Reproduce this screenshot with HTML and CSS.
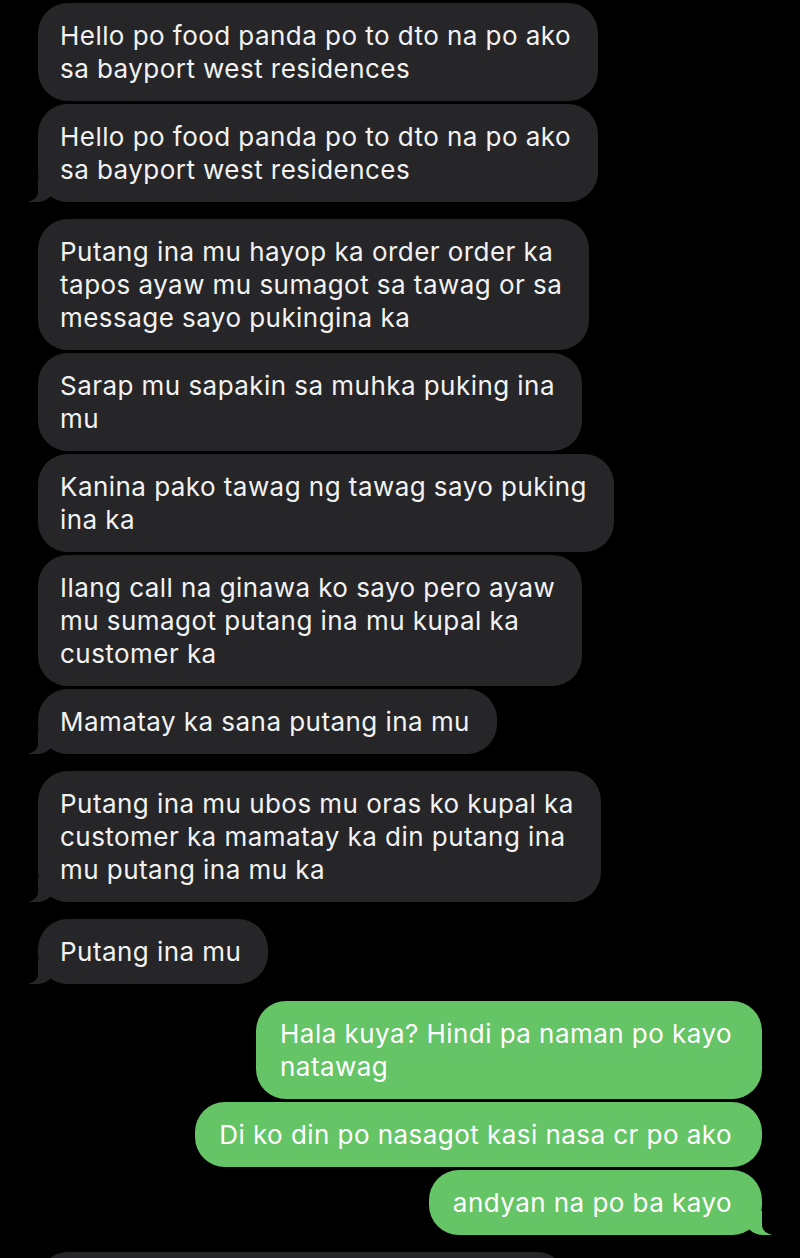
FILE: index.html
```html
<!DOCTYPE HTML>
<html>
<head>
<meta name="viewport" content="width=device-width, initial-scale=1">
<title>messages</title>
<link rel="stylesheet" href="styles.css">
</head>
<body>
<div class="thread">
  <div class="group them">
    <div class="bubble">Hello po food panda po to dto na po ako<br>sa bayport west residences</div>
    <div class="bubble tail">Hello po food panda po to dto na po ako<br>sa bayport west residences</div>
  </div>

  <div class="group them">
    <div class="bubble">Putang ina mu hayop ka order order ka<br>tapos ayaw mu sumagot sa tawag or sa<br>message sayo pukingina ka</div>
    <div class="bubble">Sarap mu sapakin sa muhka puking ina<br>mu</div>
    <div class="bubble">Kanina pako tawag ng tawag sayo puking<br>ina ka</div>
    <div class="bubble">Ilang call na ginawa ko sayo pero ayaw<br>mu sumagot putang ina mu kupal ka<br>customer ka</div>
    <div class="bubble tail">Mamatay ka sana putang ina mu</div>
  </div>

  <div class="group them">
    <div class="bubble tail">Putang ina mu ubos mu oras ko kupal ka<br>customer ka mamatay ka din putang ina<br>mu putang ina mu ka</div>
  </div>

  <div class="group them">
    <div class="bubble tail">Putang ina mu</div>
  </div>

  <div class="group me">
    <div class="bubble">Hala kuya? Hindi pa naman po kayo<br>natawag</div>
    <div class="bubble">Di ko din po nasagot kasi nasa cr po ako</div>
    <div class="bubble tail">andyan na po ba kayo</div>
  </div>

  <div class="group them">
    <div class="bubble cut">&nbsp;</div>
  </div>
</div>
</body>
</html>
```
FILE: styles.css
```css
body {
  margin: 0;
  background: #000;
  font-family: "Inter", "Liberation Sans", sans-serif;
  font-size: 26px;
  letter-spacing: 0.45px;
  line-height: 33px;
  color: #f2f2f2;
  height: 1258px;
  overflow: hidden;
}
.thread {
  display: flex;
  flex-direction: column;
  gap: 17px;
  padding: 3px 38px 0 38px;
}
.group {
  display: flex;
  flex-direction: column;
  gap: 3px;
}
.them {
  align-items: flex-start;
}
.me {
  align-items: flex-end;
}
.bubble {
  position: relative;
  padding: 16px 27px 16px 22px;
  border-radius: 30px;
  background: #262628;
}
.me .bubble {
  padding: 16px 30px 16px 24px;
  background: #65c466;
  color: #fff;
}
.bubble.tail::before,
.bubble.tail::after {
  content: "";
  position: absolute;
  bottom: 0;
  height: 24px;
}
.them .bubble.tail::before {
  left: -9px;
  width: 26px;
  background: #262628;
  border-bottom-right-radius: 18px 16px;
}
.them .bubble.tail::after {
  left: -20px;
  width: 20px;
  background: #000;
  border-bottom-right-radius: 12px 10px;
}
.me .bubble.tail::before {
  right: -9px;
  width: 26px;
  background: #65c466;
  border-bottom-left-radius: 18px 16px;
}
.me .bubble.tail::after {
  right: -20px;
  width: 20px;
  background: #000;
  border-bottom-left-radius: 12px 10px;
}
.bubble.cut {
  width: 480px;
  height: 60px;
}
```
